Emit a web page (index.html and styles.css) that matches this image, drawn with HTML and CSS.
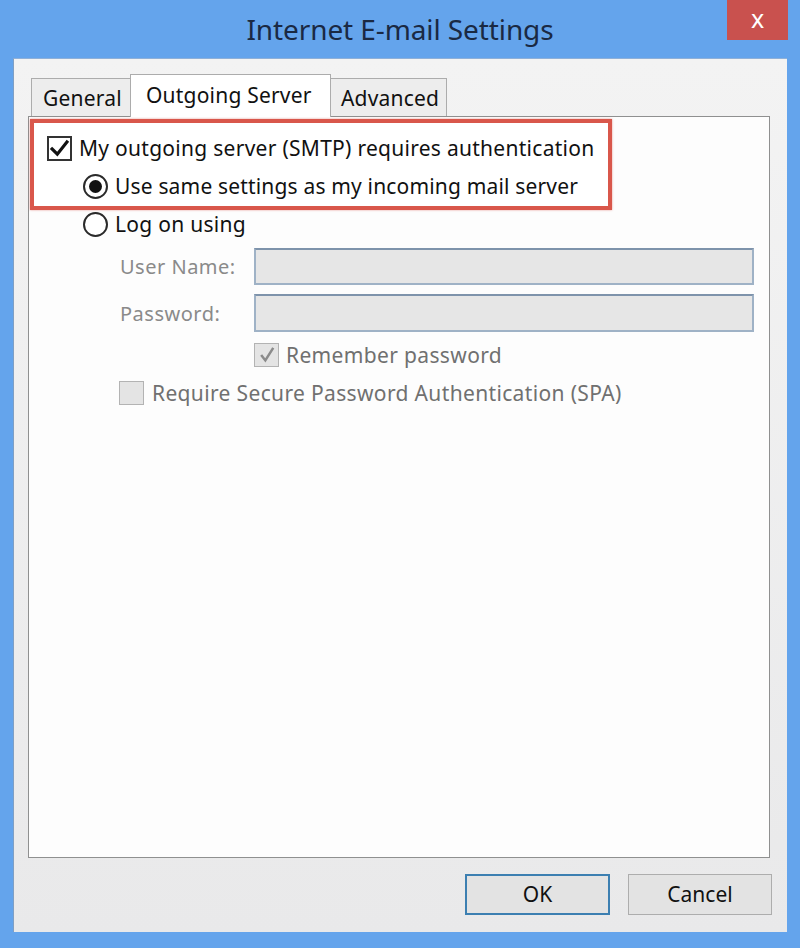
FILE: index.html
```html
<!DOCTYPE html>
<html lang="en">
<head>
<meta charset="utf-8">
<title>Internet E-mail Settings</title>
<link rel="stylesheet" href="styles.css">
</head>
<body>
<div class="window">
  <div class="titlebar">
    <div class="title">Internet E-mail Settings</div>
    <div class="close">x</div>
  </div>
  <div class="client">
    <div class="tabs">
      <div class="tab">General</div>
      <div class="tab active">Outgoing Server</div>
      <div class="tab">Advanced</div>
    </div>
    <div class="panel">
      <div class="highlight">
        <div class="row row-check">
          <span class="box box-on">
            <svg viewBox="0 0 24 24" width="21" height="21"><path d="M3.5 12.5 L9.5 18.5 L20.5 4.5" fill="none" stroke="#111" stroke-width="3.6" stroke-linecap="square"/></svg>
          </span>
          <span class="lbl">My outgoing server (SMTP) requires authentication</span>
        </div>
        <div class="row row-radio row-same">
          <span class="radio"><span class="dot"></span></span>
          <span class="lbl">Use same settings as my incoming mail server</span>
        </div>
      </div>
      <div class="row row-radio row-logon">
        <span class="radio"></span>
        <span class="lbl">Log on using</span>
      </div>
      <div class="fields">
        <span class="flabel">User Name:</span>
        <span class="input"></span>
        <span class="flabel">Password:</span>
        <span class="input"></span>
      </div>
      <div class="row row-remember">
        <span class="box box-dis">
          <svg viewBox="0 0 24 24" width="20" height="20"><path d="M5 12 L10 18.5 L19.5 3.5" fill="none" stroke="#8b8b8b" stroke-width="3"/></svg>
        </span>
        <span class="lbl dis">Remember password</span>
      </div>
      <div class="row row-spa">
        <span class="box box-dis"></span>
        <span class="lbl dis">Require Secure Password Authentication (SPA)</span>
      </div>
    </div>
    <div class="buttons">
      <div class="btn btn-default">OK</div>
      <div class="btn">Cancel</div>
    </div>
  </div>
</div>
</body>
</html>
```
FILE: styles.css
```css
* { box-sizing: border-box; }
html, body { margin: 0; padding: 0; }
body {
  width: 800px;
  height: 948px;
  background: #64a4ec;
  font-family: "Noto Sans", "Open Sans", sans-serif;
  color: #111;
  overflow: hidden;
}
.window { width: 800px; height: 948px; position: relative; }
.titlebar {
  height: 58px;
  display: flex;
  justify-content: center;
  padding-top: 9px;
}
.title {
  font-size: 28px;
  line-height: 40px;
  color: #1a2943;
  letter-spacing: -0.1px;
}
.close {
  position: absolute;
  top: 0;
  right: 12px;
  width: 61px;
  height: 40px;
  background: #c9514e;
  color: #fff;
  font-size: 25px;
  line-height: 36px;
  text-align: center;
}
.client {
  margin: 0 13px;
  height: 874px;
  background: linear-gradient(#f3f3f3, #e9e9ea);
  border-left: 1px solid #7f9fc4;
  border-top: 1px solid #8fb0d8;
  padding: 15px 17px 0 14px;
}
.tabs {
  display: flex;
  align-items: flex-end;
  height: 42px;
  padding-left: 3px;
  position: relative;
  z-index: 1;
}
.tab {
  height: 38px;
  border: 1px solid #acacac;
  border-bottom: none;
  background: #ededed;
  font-size: 21px;
  letter-spacing: 0.2px;
  line-height: 38px;
  padding: 0 10px;
  color: #111;
  white-space: nowrap;
}
.tab:first-child { width: 99px; border-right: none; padding-left: 11px; }
.tab:last-child { width: 116px; border-left: none; }
.tab.active {
  width: 201px;
  height: 43px;
  background: #fff;
  line-height: 40px;
  padding: 0 15px;
  margin-bottom: -1px;
}
.panel {
  height: 742px;
  background: #fdfdfd;
  border: 1px solid #8f9090;
  padding: 2px 15px 0 1px;
}
.highlight {
  width: 582px;
  height: 91px;
  border: 4px solid #d9574b;
  box-shadow: 0 0 2px rgba(217, 87, 75, 0.6);
  padding: 7px 0 0 13px;
  background: #fff;
}
.row {
  display: flex;
  align-items: center;
  height: 36px;
  font-size: 21px;
  letter-spacing: 0.28px;
}
.row-same { letter-spacing: 0.17px; }
.highlight .row + .row { margin-top: 2px; }
.box {
  width: 25px;
  height: 25px;
  flex: none;
  display: flex;
  align-items: center;
  justify-content: center;
}
.box-on {
  border: 2px solid #333;
  background: #fff;
}
.box-on + .lbl { margin-left: 7px; }
.box-dis {
  border: 1px solid #b3b3b3;
  background: #e4e4e4;
}
.radio {
  width: 25px;
  height: 25px;
  border: 2px solid #2a2a2a;
  border-radius: 50%;
  background: #fff;
  flex: none;
  display: flex;
  align-items: center;
  justify-content: center;
  margin-left: 36px;
}
.dot {
  width: 13px;
  height: 13px;
  border-radius: 50%;
  background: #111;
}
.radio + .lbl { margin-left: 7px; }
.row-logon {
  height: 32px;
  margin-left: 17px;
  margin-top: -2px;
}
.lbl { white-space: nowrap; }
.dis { color: #707070; letter-spacing: 0.35px; }
.fields {
  display: grid;
  grid-template-columns: 134px 500px;
  row-gap: 9px;
  margin: 8px 0 0 90px;
  align-items: center;
}
.flabel {
  font-size: 20px;
  color: #8a8a8a;
  letter-spacing: 0.5px;
}
.input {
  height: 37px;
  background: #e6e6e6;
  border: 2px solid #9fb2c6;
  border-top-color: #7e93ab;
  display: block;
}
.fields .input:last-child { height: 38px; }
.row-remember {
  margin: 10px 0 0 224px;
  height: 26px;
}
.row-remember .box { width: 25px; height: 24px; }
.row-remember .lbl { margin-left: 7px; }
.row-spa {
  margin: 12px 0 0 89px;
  height: 26px;
}
.row-spa .box { width: 25px; height: 24px; }
.row-spa .lbl { margin-left: 8px; }
.buttons {
  display: flex;
  justify-content: flex-end;
  gap: 18px;
  margin-top: 16px;
  margin-right: -2px;
}
.btn {
  width: 144px;
  height: 41px;
  border: 1px solid #adadad;
  background: #e3e3e3;
  font-size: 21px;
  line-height: 39px;
  text-align: center;
  color: #111;
}
.btn-default {
  border: 2px solid #3c7fb1;
  width: 145px;
  line-height: 37px;
}
```
